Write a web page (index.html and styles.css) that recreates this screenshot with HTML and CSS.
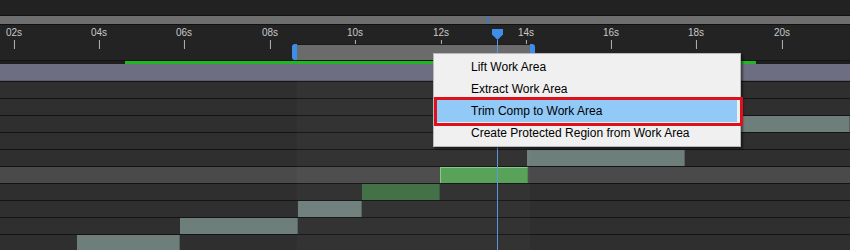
FILE: index.html
```html
<!DOCTYPE html>
<html lang="en">
<head>
    <meta charset="UTF-8">
    <title>Timeline</title>
    <link rel="stylesheet" href="styles.css">
</head>
<body>
    <div class="timeline">
        <div class="topbar"></div>
        <div class="nav">
            <span class="nav-mark" style="left: 487px;"></span>
        </div>
        <div class="ruler">
            <div class="tick" style="left: 14px;"><span>02s</span><i></i></div>
            <div class="tick" style="left: 99px;"><span>04s</span><i></i></div>
            <div class="tick" style="left: 184px;"><span>06s</span><i></i></div>
            <div class="tick" style="left: 270px;"><span>08s</span><i></i></div>
            <div class="tick" style="left: 355px;"><span>10s</span><i></i></div>
            <div class="tick" style="left: 441px;"><span>12s</span><i></i></div>
            <div class="tick" style="left: 526px;"><span>14s</span><i></i></div>
            <div class="tick" style="left: 611px;"><span>16s</span><i></i></div>
            <div class="tick" style="left: 696px;"><span>18s</span><i></i></div>
            <div class="tick" style="left: 782px;"><span>20s</span><i></i></div>

            <div class="work-area" style="left: 292px; width: 243px;">
                <span class="handle handle-in"></span>
                <span class="work-fill"></span>
                <span class="handle handle-out"></span>
            </div>
            <div class="playhead" style="left: 492px;"></div>
        </div>
        <div class="range">
            <span class="range-fill" style="margin-left: 125px; width: 631px;"></span>
        </div>
        <div class="comp"></div>
        <div class="tracks">
            <div class="track"></div>
            <div class="track"></div>
            <div class="track"><span class="clip" style="margin-left: 741px; width: 109px;"></span></div>
            <div class="track"></div>
            <div class="track"><span class="clip" style="margin-left: 527px; width: 158px;"></span></div>
            <div class="track selected"><span class="clip clip-active" style="margin-left: 440px; width: 88px;"></span></div>
            <div class="track"><span class="clip clip-green" style="margin-left: 362px; width: 78px;"></span></div>
            <div class="track"><span class="clip" style="margin-left: 298px; width: 64px;"></span></div>
            <div class="track"><span class="clip" style="margin-left: 180px; width: 118px;"></span></div>
            <div class="track"><span class="clip" style="margin-left: 77px; width: 103px;"></span></div>
            <div class="work-shade" style="left: 297px; width: 233px;"></div>
        </div>

        <div class="cti" style="left: 497px;"></div>

        <ul class="menu">
            <li>Lift Work Area</li>
            <li>Extract Work Area</li>
            <li class="hover">Trim Comp to Work Area</li>
            <li>Create Protected Region from Work Area</li>
        </ul>
    </div>
</body>
</html>
```

FILE: styles.css
```css
* {
    padding: 0;
    margin: 0;
    box-sizing: border-box;
}

body {
    background-color: #232323;
    font-family: "Liberation Sans", Arial, sans-serif;
}

div.timeline {
    position: relative;
    width: 850px;
    height: 250px;
    overflow: hidden;
    background-color: #232323;
}

div.topbar {
    height: 15px;
    background-color: #222222;
}

div.nav {
    position: relative;
    height: 10px;
    background-color: #6e6e6e;
    border-top: 1px solid #111;
    border-bottom: 1px solid #111;
}

span.nav-mark {
    position: absolute;
    top: 0;
    width: 2px;
    height: 8px;
    background-color: #3a78c2;
}

div.ruler {
    position: relative;
    height: 35px;
    background-color: #232323;
}

div.tick {
    position: absolute;
    top: 3px;
    display: flex;
    flex-direction: column;
    align-items: center;
    transform: translateX(-50%);
}

div.tick span {
    font-size: 10px;
    line-height: 10px;
    color: #c9c9c9;
}

div.tick i {
    display: block;
    width: 1px;
    height: 9px;
    margin-top: 2px;
    background-color: #b4b4b4;
}

div.work-area {
    position: absolute;
    top: 19px;
    height: 16px;
    display: flex;
}

span.work-fill {
    flex: 1;
    background-color: #6b6b6b;
    border-top: 1px solid #1c1c1c;
}

span.handle {
    width: 5px;
    background-color: #3d8ee8;
}

span.handle-in {
    border-radius: 3px 0 0 3px;
}

span.handle-out {
    border-radius: 0 3px 3px 0;
}

div.playhead {
    position: absolute;
    top: 4px;
    width: 11px;
    height: 11px;
    background-color: #3d8ee8;
    clip-path: polygon(0 0, 100% 0, 100% 50%, 50% 100%, 0 50%);
}

div.range {
    display: flex;
    height: 4px;
    border-top: 1px solid #121212;
    background-color: #1e1e1e;
}

span.range-fill {
    display: block;
    height: 3px;
    background-color: #1fb824;
}

div.comp {
    height: 17px;
    background-color: #6e6e82;
    border-bottom: 1px solid #5c5c6c;
}

div.tracks {
    position: relative;
}

div.track {
    display: flex;
    height: 17px;
    border-top: 1px solid #141414;
    background-color: #2f2f2f;
}

div.track.selected {
    background-color: #4a4a4a;
}

span.clip {
    display: block;
    height: 16px;
    background-color: #6e7e7a;
    border-right: 1px solid #56625f;
}

span.clip-green {
    background-color: #3f6e44;
    border-right-color: #35583a;
}

span.clip-active {
    background-color: #56a057;
    border-top: 1px solid #8cc38c;
    border-left: 1px solid #8cc38c;
    border-right-color: #4a8a4b;
}

div.work-shade {
    position: absolute;
    top: 0;
    bottom: 0;
    background-color: rgba(255, 255, 255, 0.025);
    pointer-events: none;
}

div.cti {
    position: absolute;
    top: 40px;
    bottom: 0;
    width: 1px;
    background-color: #5a97e0;
}

ul.menu {
    position: absolute;
    left: 433px;
    top: 53px;
    width: 308px;
    padding: 2px 0;
    list-style: none;
    background-color: #f0f0f0;
    border: 1px solid #b9b9b9;
    box-shadow: 2px 2px 2px rgba(0, 0, 0, 0.45);
}

ul.menu li {
    position: relative;
    height: 22px;
    margin: 0 3px;
    padding-left: 34px;
    font-size: 12px;
    line-height: 22px;
    color: #000;
}

ul.menu li.hover {
    background-color: #91c9f7;
}

ul.menu li.hover::after {
    content: '';
    position: absolute;
    left: -3px;
    right: -6px;
    top: -3px;
    bottom: -4px;
    border: 3px solid #e0101a;
}
```
